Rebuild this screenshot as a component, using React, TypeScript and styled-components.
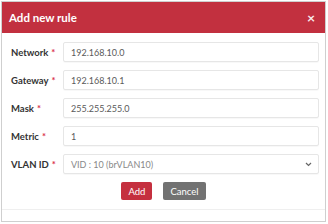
import React from 'react'
import styled, { createGlobalStyle } from 'styled-components'

const GlobalStyle = createGlobalStyle`
    body {
        margin: 0;
        background: #fff;
        font-family: Lato, "Liberation Sans", sans-serif;
    }
`

const Dialog = styled.div`
    margin: 1px 0 0 1px;
    width: 325px;
    height: 221px;
    box-sizing: border-box;
    border: 1px solid #cfcfcf;
    display: flex;
    flex-direction: column;
    background: #fff;
`

const Header = styled.div`
    height: 31px;
    background: #c2303f;
    color: #fff;
    display: flex;
    align-items: center;
    justify-content: space-between;
    padding: 0 10px 0 7px;
`

const Title = styled.div`
    font-size: 11.5px;
    font-weight: bold;
`

const Close = styled.div`
    font-size: 14px;
    font-weight: bold;
    line-height: 1;
    opacity: 0.9;
`

const Body = styled.div`
    padding: 9px 6px 0 9px;
    display: flex;
    flex-direction: column;
    gap: 8px;
`

const Row = styled.div`
    display: flex;
    align-items: center;
    height: 20px;
`

const Label = styled.div`
    width: 52px;
    font-size: 9.5px;
    font-weight: bold;
    color: #333;
`

const Star = styled.span`
    color: #d9304a;
    margin-left: 3px;
`

const Field = styled.div<{ $select?: boolean }>`
    flex: 1;
    height: 20px;
    box-sizing: border-box;
    border: 1px solid #e6e6e6;
    border-radius: 2px;
    box-shadow: 0 1px 1px rgba(0, 0, 0, 0.03);
    display: flex;
    align-items: center;
    justify-content: space-between;
    padding: 0 6px 0 7px;
    font-size: 9px;
    color: ${p => (p.$select ? '#888' : '#5a5a5a')};
`

const Footer = styled.div`
    display: flex;
    justify-content: center;
    gap: 11px;
    margin-top: 8px;
    padding-bottom: 9px;
    border-bottom: 1px solid #efefef;
`

const Button = styled.button<{ $variant: 'primary' | 'secondary' }>`
    height: 18px;
    border: none;
    border-radius: 2px;
    padding: 0 7px;
    font-family: Lato, "Liberation Sans", sans-serif;
    font-size: 9.5px;
    color: #fff;
    background: ${p => (p.$variant === 'primary' ? '#c5303f' : '#727272')};
`

const fields = [
    { label: 'Network', value: '192.168.10.0' },
    { label: 'Gateway', value: '192.168.10.1' },
    { label: 'Mask', value: '255.255.255.0' },
    { label: 'Metric', value: '1' },
]

const Chevron = () => (
    <svg width="7" height="5" viewBox="0 0 7 5">
        <path d="M1 1l2.5 2.5L6 1" stroke="#666" strokeWidth="1.2" fill="none" />
    </svg>
)

const App: React.FC = () => {
    return (
        <>
            <GlobalStyle />
            <Dialog>
                <Header>
                    <Title>Add new rule</Title>
                    <Close>×</Close>
                </Header>
                <Body>
                    {fields.map(f => (
                        <Row key={f.label}>
                            <Label>
                                {f.label}
                                <Star>*</Star>
                            </Label>
                            <Field>{f.value}</Field>
                        </Row>
                    ))}
                    <Row>
                        <Label>
                            VLAN ID
                            <Star>*</Star>
                        </Label>
                        <Field $select>
                            VID : 10 (brVLAN10)
                            <Chevron />
                        </Field>
                    </Row>
                </Body>
                <Footer>
                    <Button $variant="primary">Add</Button>
                    <Button $variant="secondary">Cancel</Button>
                </Footer>
            </Dialog>
        </>
    )
}

export default App
